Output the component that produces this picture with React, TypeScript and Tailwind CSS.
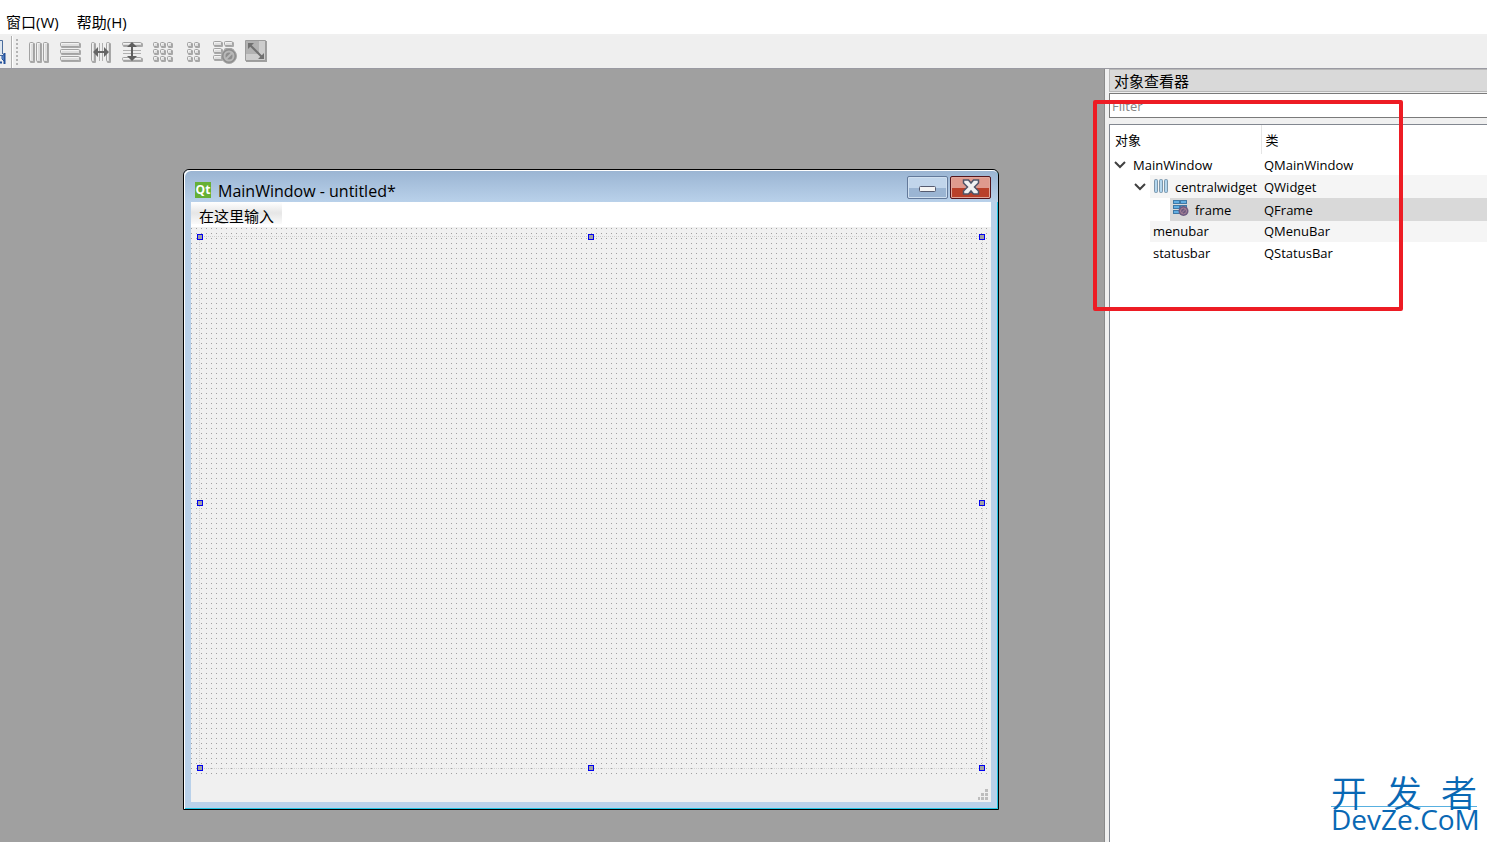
import type { ReactNode } from "react";

const BAR = "#b0b0b0";

function Cells({ xs, ys, w, h }: { xs: number[]; ys: number[]; w: number; h: number }) {
  return (
    <>
      {ys.map((y) =>
        xs.map((x) => (
          <g key={`${x}-${y}`}>
            <rect x={x + 1} y={y + 1} width={w} height={h} rx="1" fill="#a8a8a8" />
            <rect x={x + 0.5} y={y + 0.5} width={w - 1} height={h - 1} rx="1" fill="#dedede" stroke="#a2a2a2" />
            <path d={`M${x + 1.5} ${y + h - 2}V${y + 1.5}h${w - 3}`} fill="none" stroke="#f2f2f2" />
          </g>
        )),
      )}
    </>
  );
}

const tools: { label: string; icon: ReactNode }[] = [
  { label: "Lay Out Horizontally", icon: <Cells xs={[1, 8, 15]} ys={[1]} w={5} h={20} /> },
  { label: "Lay Out Vertically", icon: <Cells xs={[1]} ys={[1, 8, 15]} w={20} h={5} /> },
  {
    label: "Lay Out Horizontally in Splitter",
    icon: (
      <>
        <Cells xs={[1, 16]} ys={[1]} w={4} h={20} />
        <path d="M9.5 2v18M12.5 2v18" stroke={BAR} />
        <path d="M3 11l5-5v4h6V6l5 5-5 5v-4H8v4z" fill="#666" />
      </>
    ),
  },
  {
    label: "Lay Out Vertically in Splitter",
    icon: (
      <>
        <Cells xs={[1]} ys={[1, 16]} w={20} h={4} />
        <path d="M2 9.5h18M2 12.5h18" stroke={BAR} />
        <path d="M11 1l5 5h-4v9h4l-5 5-5-5h4V6H6z" fill="#606060" />
      </>
    ),
  },
  { label: "Lay Out in a Grid", icon: <Cells xs={[1, 8, 15]} ys={[1, 8, 15]} w={5} h={5} /> },
  { label: "Lay Out in a Form Layout", icon: <Cells xs={[4, 11]} ys={[1, 8, 15]} w={5} h={5} /> },
];

function ToolButton({ label, children }: { label: string; children: ReactNode }) {
  return (
    <button type="button" aria-label={label} className="flex w-[31px] shrink-0 justify-center">
      {children}
    </button>
  );
}

function Toolbar() {
  return (
    <div role="toolbar" className="flex h-[35px] items-center border-t-2 border-b border-t-[#f0f0f0] border-b-[#9a9aa2] bg-[#efefef]">
      <svg width="23" height="32" className="shrink-0">
        <path d="M0 4h2v15H0z" fill="#dfe7f0" />
        <path d="M0 4.500h2.500V18M0 19.500h2" fill="none" stroke="#4a6c9c" />
        <path d="M5 17.500L2 20v3l3 3" fill="#7ba7e0" stroke="#24519a" />
        <path d="M4.500 17v11M0 26.500h2" stroke="#24519a" strokeWidth="2" />
        <path d="M11.500 0v32" stroke="#b0b0b0" />
        <path d="M12.500 0v32" stroke="#fff" />
        <path d="M17 3v27" stroke="#b4b4b4" strokeWidth="2" strokeDasharray="2 2" />
      </svg>
      {tools.map((t) => (
        <ToolButton key={t.label} label={t.label}>
          <svg width="22" height="22">{t.icon}</svg>
        </ToolButton>
      ))}
      <ToolButton label="Break Layout">
        <svg width="26" height="24">
          <Cells xs={[1, 12]} ys={[1, 8, 15]} w={9} h={5} />
          <circle cx="17" cy="16" r="7.5" fill="#8d8d8d" stroke="#a8a8a8" />
          <circle cx="17" cy="16" r="4.5" fill="none" stroke="#b8b8b8" strokeWidth="2" />
          <path d="M14 19l6-6" stroke="#b8b8b8" strokeWidth="2" />
        </svg>
      </ToolButton>
      <ToolButton label="Adjust Size">
        <svg width="24" height="24">
          <path d="M2 1h21v21H2z" fill="#a0a0a0" />
          <path d="M1.500 .5h20v20h-20z" fill="#cdcdcd" stroke="#9c9c9c" />
          <path d="M2 1h13v13H2z" fill="#b2b2b2" />
          <path d="M6 5l12 12" stroke="#707070" strokeWidth="2" />
          <path d="M4 3h6l-6 6zM20 19h-6l6-6z" fill="#707070" />
        </svg>
      </ToolButton>
    </div>
  );
}

const handles = [
  "left-0 top-0",
  "left-1/2 top-0",
  "left-full top-0",
  "left-0 top-1/2",
  "left-full top-1/2",
  "left-0 top-full",
  "left-1/2 top-full",
  "left-full top-full",
];

function DesignWindow() {
  return (
    <section className="flex h-[641px] w-[816px] shrink-0 flex-col rounded-t-md border border-black bg-[#b9d1ea] shadow-[inset_1px_1px_0_#fff,inset_-1px_-1px_0_#20c4e4]">
      <div className="flex h-8 shrink-0 items-center rounded-t-md bg-linear-to-b from-[#9ab4d2] to-[#b9d1ea] pr-[7px] pl-[11px] shadow-[inset_1px_1px_0_#fff]">
        <svg width="16" height="16" className="mt-2">
          <path d="M0 0h16v16H0z" fill="#66b036" />
          <text x="8" y="12" textAnchor="middle" fontSize="12" fontWeight="700" fill="#fff" fontFamily="Open Sans, sans-serif">Qt</text>
        </svg>
        <h1 className="mt-[10px] ml-[7px] flex-1 text-[16px] leading-5">MainWindow - untitled*</h1>
        <button type="button" aria-label="Minimize" className="mt-[2px] flex h-[23px] w-[41px] items-center justify-center rounded-xs border border-[#63799a] bg-linear-to-b from-[#c1d5eb] from-50% to-[#9bb5d3] to-50% shadow-[inset_0_0_0_1px_#d0e0f0]">
          <svg width="17" height="6" className="mt-1"><rect x=".5" y=".5" width="16" height="5" rx="1" fill="#f4f4f4" stroke="#555b70" /></svg>
        </button>
        <button type="button" aria-label="Close" className="mt-[2px] ml-[2px] flex h-[23px] w-[41px] items-center justify-center rounded-xs border border-[#53141c] bg-linear-to-b from-[#df9a8e] from-50% to-[#b9402a] to-50% shadow-[inset_0_0_0_1px_#e0a79c]">
          <svg width="18" height="16">
            <path d="M1.500 1h5L9 4l2.500-3h5v3L12.500 8l4 4v3h-5L9 12l-2.500 3h-5v-3l4-4-4-4z" fill="#f1f1f1" stroke="#4f5468" strokeWidth="1.500" />
          </svg>
        </button>
      </div>
      <div className="mx-[7px] mb-[7px] flex flex-1 flex-col bg-[#f0f0f0]">
        <div className="flex h-[25px] items-start bg-white">
          <button type="button" className="h-[22px] bg-linear-to-b from-white via-[#e6e6e6] to-[#fafafa] px-2 pt-1 text-[15px] leading-5">在这里输入</button>
        </div>
        <div className="relative h-[547px]">
          <svg className="block size-full">
            <defs>
              <pattern id="grid" width="5" height="5" patternUnits="userSpaceOnUse">
                <rect y="1" width="1" height="1" fill="#a0a0a0" />
              </pattern>
            </defs>
            <rect width="100%" height="100%" fill="url(#grid)" />
          </svg>
          <div className="absolute inset-x-[8px] top-[9px] bottom-[5px] border border-dotted border-[#d0d0d0]">
            {handles.map((place) => (
              <span key={place} className={`absolute size-[6px] -translate-1/2 border border-[#0000f0] bg-[#a0a0a4] ${place}`} />
            ))}
          </div>
        </div>
        <div className="flex flex-1 items-end justify-end px-[2px] pb-px">
          <svg width="12" height="12">
            <path d="M8 0h3v3H8zM4 4h3v3H4zM8 4h3v3H8zM1 8h2v3H1zM4 8h3v3H4zM8 8h3v3H8z" fill="#bdbdbd" />
          </svg>
        </div>
      </div>
    </section>
  );
}

function Chevron() {
  return (
    <svg width="12" height="8" className="shrink-0">
      <path d="M1 1l5 5 5-5" fill="none" stroke="#404040" strokeWidth="2" />
    </svg>
  );
}

function LayoutIcon() {
  return (
    <svg width="16" height="16" className="mb-[2px] shrink-0">
      {[0, 5, 10].map((x) => (
        <g key={x}>
          <rect x={x + 1.5} y="1.500" width="3" height="13" rx="1" fill="#a4cdea" stroke="#7c97ab" />
          <path d={`M${x + 3} 3v10`} stroke="#c4e0f3" />
        </g>
      ))}
    </svg>
  );
}

function FrameIcon() {
  return (
    <svg width="17" height="17" className="mb-[2px] shrink-0">
      {[1, 6, 11].map((y) => (
        <g key={y} fill="#62aee2" stroke="#3f79a6">
          <rect x="1.500" y={y - 0.5} width="6" height="3" />
          <rect x="8.500" y={y - 0.5} width="6" height="3" />
        </g>
      ))}
      <circle cx="11.500" cy="11" r="5" fill="#6d5a80" />
      <circle cx="11.500" cy="11" r="3" fill="none" stroke="#a98396" />
      <path d="M9.500 13l4-4" stroke="#a98396" />
    </svg>
  );
}

function Inspector() {
  return (
    <aside className="relative flex w-[383px] shrink-0 flex-col border-l border-[#8a8a8a] bg-[#f0f0f0] pl-1">
      <h2 className="mb-px h-[23px] border border-r-0 border-[#b8b8b8] bg-[#d9d9d9] pl-1 text-[15px] leading-[22px]">对象查看器</h2>
      <input aria-label="Filter" placeholder="Filter" className="h-[25px] border border-r-0 border-[#7a7a7a] bg-white pl-[2px] text-[13px] placeholder:text-[#858585]" />
      <div className="mt-[6px] flex-1 border border-r-0 border-b-0 border-[#828790] bg-white">
        <table className="w-full table-fixed border-collapse text-left text-[13px] leading-5">
          <colgroup>
            <col className="w-[151px]" />
            <col />
          </colgroup>
          <thead>
            <tr className="h-[29px]">
              <th className="border-r border-[#e5e5e5] p-0 pl-[5px] font-normal">对象</th>
              <th className="p-0 pl-1 font-normal">类</th>
            </tr>
          </thead>
          <tbody>
            <tr className="h-[21px]">
              <td className="p-0"><div className="flex items-center gap-[7px] pl-1"><Chevron />MainWindow</div></td>
              <td className="p-0 pl-[3px]">QMainWindow</td>
            </tr>
            <tr className="h-[23px]">
              <td className="p-0">
                <div className="flex h-[23px] items-center pl-6">
                  <Chevron />
                  <div className="ml-1 flex h-full flex-1 items-center gap-[6px] bg-[#f5f5f5] pl-[3px]"><LayoutIcon />centralwidget</div>
                </div>
              </td>
              <td className="bg-[#f5f5f5] p-0 pl-[3px]">QWidget</td>
            </tr>
            <tr className="h-[23px]">
              <td className="p-0 pl-[60px]">
                <div className="flex h-[23px] items-center gap-[6px] bg-[#d9d9d9] pl-[2px]"><FrameIcon />frame</div>
              </td>
              <td className="bg-[#d9d9d9] p-0 pl-[3px]">QFrame</td>
            </tr>
            <tr className="h-[21px]">
              <td className="p-0 pl-10"><div className="h-[21px] bg-[#f5f5f5] pl-[3px] leading-[21px]">menubar</div></td>
              <td className="bg-[#f5f5f5] p-0 pl-[3px] leading-[21px]">QMenuBar</td>
            </tr>
            <tr className="h-[21px]">
              <td className="p-0 pl-[43px]">statusbar</td>
              <td className="p-0 pl-[3px]">QStatusBar</td>
            </tr>
          </tbody>
        </table>
      </div>
      <div className="pointer-events-none absolute top-[31px] -left-[12px] h-[211px] w-[310px] rounded-xs border-4 border-[#ed1c24]" />
      <div className="absolute right-[10px] bottom-[11px] w-[146px] text-[#0968b4]">
        <div className="flex justify-between border-b border-[#58b0e0] pb-px font-['Noto_Sans_CJK_SC',sans-serif] text-[36px] leading-[28px] font-[350]"><span>开</span><span>发</span><span>者</span></div>
        <div className="text-[28px] leading-[24px]">DevZe.CoM</div>
      </div>
    </aside>
  );
}

export default function App() {
  return (
    <div className="flex min-h-screen flex-col overflow-hidden bg-[#f0f0f0] font-['Open_Sans','Noto_Sans_CJK_SC',sans-serif] text-black">
      <nav className="flex h-[34px] items-end gap-[18px] bg-white px-[6px] pb-[2px] text-[15px] leading-5">
        <button type="button">窗口(W)</button>
        <button type="button">帮助(H)</button>
      </nav>
      <Toolbar />
      <div className="flex flex-1">
        <main className="min-w-0 flex-1 bg-[#a0a0a0] pt-[100px] pl-[183px]">
          <DesignWindow />
        </main>
        <Inspector />
      </div>
    </div>
  );
}
